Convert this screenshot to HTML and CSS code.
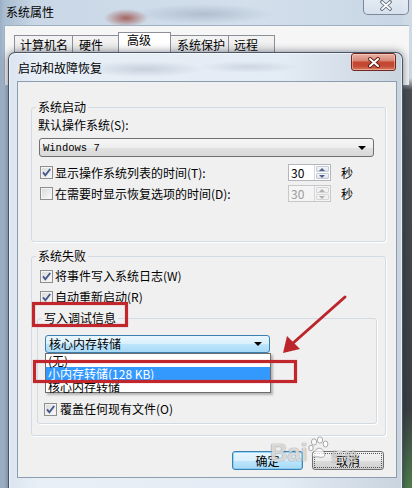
FILE: index.html
```html
<!DOCTYPE html>
<html lang="zh-CN">
<head>
<meta charset="utf-8">
<title>启动和故障恢复</title>
<link rel="stylesheet" href="styles.css">
</head>
<body>
<div class="desk">
  <div class="win-back">
    <div class="wb-titlebar">
      <span class="wb-title">系统属性</span>
      <span class="wb-close"><svg width="14" height="11" viewBox="0 0 14 11"><path d="M3 2 L11 9 M11 2 L3 9" stroke="#59677a" stroke-width="3.6" stroke-linecap="round"/><path d="M3 2 L11 9 M11 2 L3 9" stroke="#fff" stroke-width="1.8" stroke-linecap="round"/></svg></span>
    </div>
    <div class="wb-client">
      <div class="tabs">
        <div class="tab t1">计算机名</div>
        <div class="tab t2">硬件</div>
        <div class="tab t3 sel">高级</div>
        <div class="tab t4">系统保护</div>
        <div class="tab t5">远程</div>
      </div>
    </div>
  </div>

  <div class="dlg">
    <div class="dlg-titlebar">
      <span class="dlg-title">启动和故障恢复</span>
      <span class="dlg-close"><svg width="14" height="11" viewBox="0 0 14 11"><path d="M3 2 L11 9 M11 2 L3 9" stroke="#5a1e16" stroke-width="3.8" stroke-linecap="round"/><path d="M3 2 L11 9 M11 2 L3 9" stroke="#fff" stroke-width="2" stroke-linecap="round"/></svg></span>
    </div>
    <div class="client">
      <fieldset class="grp g1">
        <legend>系统启动</legend>
        <div class="lbl">默认操作系统(S):</div>
        <div class="combo sys"><span class="combo-text mono">Windows 7</span><span class="arrow"></span></div>
        <div class="row r1">
          <span class="cb"><svg width="11" height="11" viewBox="0 0 11 11"><path d="M2 5.3 L4.4 8.3 L9.2 2" fill="none" stroke="#44598a" stroke-width="1.9"/></svg></span>
          <span class="row-label">显示操作系统列表的时间(T):</span>
          <span class="spin"><span class="spin-val">30</span><span class="spin-btns"><span class="sb up"></span><span class="sb dn"></span></span></span>
          <span class="sec">秒</span>
        </div>
        <div class="row r2">
          <span class="cb"></span>
          <span class="row-label">在需要时显示恢复选项的时间(D):</span>
          <span class="spin dis"><span class="spin-val">30</span><span class="spin-btns"><span class="sb up"></span><span class="sb dn"></span></span></span>
          <span class="sec">秒</span>
        </div>
      </fieldset>

      <fieldset class="grp g2">
        <legend>系统失败</legend>
        <div class="cbrow ca">
          <span class="cb"><svg width="11" height="11" viewBox="0 0 11 11"><path d="M2 5.3 L4.4 8.3 L9.2 2" fill="none" stroke="#44598a" stroke-width="1.9"/></svg></span>
          <span>将事件写入系统日志(W)</span>
        </div>
        <div class="cbrow cb2">
          <span class="cb"><svg width="11" height="11" viewBox="0 0 11 11"><path d="M2 5.3 L4.4 8.3 L9.2 2" fill="none" stroke="#44598a" stroke-width="1.9"/></svg></span>
          <span>自动重新启动(R)</span>
        </div>
        <fieldset class="grp g3">
          <legend>写入调试信息</legend>
          <div class="combo-wrap">
            <div class="combo open"><span class="combo-text">核心内存转储</span><span class="arrow"></span></div>
            <div class="dd">
              <div class="dd-item">(无)</div>
              <div class="dd-item hl">小内存转储(128 KB)</div>
              <div class="dd-item">核心内存转储</div>
            </div>
          </div>
          <div class="cbrow cc">
            <span class="cb"><svg width="11" height="11" viewBox="0 0 11 11"><path d="M2 5.3 L4.4 8.3 L9.2 2" fill="none" stroke="#44598a" stroke-width="1.9"/></svg></span>
            <span>覆盖任何现有文件(O)</span>
          </div>
        </fieldset>
      </fieldset>

      <div class="btnrow">
        <span class="btn default">确定</span>
        <span class="btn cancel">取消</span>
      </div>
    </div>
  </div>

  <div class="watermark">
    <span class="wm-bai">Bai</span>
    <svg class="wm-paw" width="22" height="26" viewBox="0 0 22 26">
      <g fill="rgba(255,255,255,.7)" stroke="rgba(110,110,110,.55)" stroke-width="1">
        <ellipse cx="6" cy="6" rx="2.6" ry="3.2"/>
        <ellipse cx="12" cy="4" rx="2.6" ry="3.2"/>
        <ellipse cx="17.5" cy="8" rx="2.4" ry="3"/>
        <ellipse cx="3" cy="12" rx="2.2" ry="2.8"/>
        <path d="M6 21 C3 21 4 16 9 13 C12 11 15 13 16.5 17 C18 21 14 22 11 21 C9 20.5 8 21 6 21 Z"/>
      </g>
    </svg>
    <span class="wm-jy">经验</span>
  </div>

  <svg class="annot" width="412" height="488" viewBox="0 0 412 488">
    <rect x="33.5" y="303.5" width="93" height="22" fill="none" stroke="#c0262c" stroke-width="3.2"/>
    <rect x="34.5" y="361.5" width="261" height="20" fill="none" stroke="#c0262c" stroke-width="3.2"/>
    <line x1="345" y1="297" x2="292" y2="344" stroke="#bb252b" stroke-width="3" stroke-linecap="round"/>
    <polygon points="283,353 287,336 300,349" fill="#bb252b"/>
  </svg>
</div>
</body>
</html>
```

FILE: styles.css
```css
* { box-sizing: border-box; }
html, body { margin: 0; padding: 0; }
body {
  width: 412px;
  height: 488px;
  overflow: hidden;
  font-family: "Noto Sans CJK SC", "Noto Sans", sans-serif;
  font-size: 12px;
  line-height: 14px;
  color: #000;
}
.desk {
  position: relative;
  width: 412px;
  height: 488px;
  overflow: hidden;
  background: #c8d6e5;
}

/* ---------- background window (系统属性) ---------- */
.win-back {
  position: absolute;
  left: -6px;
  top: -10px;
  width: 424px;
  height: 510px;
  background:
    linear-gradient(to bottom, #cfdae6 0, #cfdae6 88px, #4a4e52 100px, #3c4044 420px, #4f7c4d 495px) right top / 15px 100% no-repeat,
    radial-gradient(ellipse 22px 9px at 132px 28px, rgba(150,60,50,.75), rgba(150,60,50,0)),
    radial-gradient(ellipse 70px 10px at 210px 24px, rgba(150,165,185,.55), rgba(150,165,185,0)),
    linear-gradient(to right, #8299b3 0, #a9bcd0 10px, #c9d7e6 40px, #d3dfeb 60%, #c7d5e4 100%);
  display: flex;
  flex-direction: column;
}
.wb-titlebar {
  display: flex;
  align-items: flex-start;
  height: 35px;
}
.wb-title {
  margin: 15px 0 0 12px;
  color: #000;
}
.wb-close {
  margin: 4px 9px 0 auto;
  width: 46px;
  height: 21px;
  border: 1px solid rgba(70,85,105,.65);
  border-top: none;
  border-radius: 0 0 5px 5px;
  background: linear-gradient(to bottom, rgba(255,255,255,.55), rgba(225,233,242,.55));
  display: flex;
  align-items: center;
  justify-content: center;
  padding-top: 3px;
}
.wb-client {
  margin-left: 10px;
  width: 405px;
  height: 60px;
  background: #f6f6f6;
  border-left: 1px solid #9fb0c2;
  border-top: 1px solid #9fb0c2;
}
.tabs {
  display: flex;
  align-items: flex-start;
  margin-top: 6px;
  padding-left: 9px;
  height: 40px;
}
.tab {
  margin-top: 3px;
  height: 30px;
  margin-left: -1px;
  border: 1px solid #8c8f97;
  border-bottom: none;
  background: linear-gradient(to bottom, #f4f4f4, #e2e2e2);
  padding: 2px 0 0 6px;
  white-space: nowrap;
}
.tab.t1 { width: 59px; margin-left: 0; padding-left: 5px; }
.tab.t2 { width: 47px; }
.tab.t3 { width: 53px; }
.tab.t4 { width: 59px; }
.tab.t5 { width: 47px; padding-left: 5px; }
.tab.sel {
  margin-top: 0;
  background: #fff;
  padding: 0 0 0 8px;
  position: relative;
  z-index: 1;
}

/* ---------- dialog (启动和故障恢复) ---------- */
.dlg {
  position: absolute;
  left: 8px;
  top: 52px;
  width: 395px;
  height: 446px;
  border: 1px solid rgba(35,50,68,.8);
  border-radius: 7px 7px 0 0;
  padding: 0 5px 0 8px;
  background:
    radial-gradient(ellipse 60px 8px at 135px 16px, rgba(160,172,190,.45), rgba(160,172,190,0)),
    radial-gradient(ellipse 50px 6px at 240px 14px, rgba(170,182,198,.4), rgba(170,182,198,0)),
    linear-gradient(to right, #dbe5f0 0, #e8eff7 30px, #e3ebf4 70%, #c9d4df 100%);
  box-shadow: 0 0 8px rgba(20,30,45,.55), inset 0 0 0 1px rgba(255,255,255,.55);
  z-index: 2;
}
.dlg-titlebar {
  display: flex;
  align-items: flex-start;
  height: 28px;
}
.dlg-title {
  margin: 8px 0 0 1px;
}
.dlg-close {
  margin: 0 1px 0 auto;
  width: 45px;
  height: 18px;
  border: 1px solid #6e2a20;
  border-radius: 3px;
  background: linear-gradient(to bottom, #eab2a4 0%, #d88a78 40%, #c5462f 52%, #c24a34 75%, #dc7a60 100%);
  box-shadow: inset 0 0 0 1px rgba(255,225,215,.45);
  display: flex;
  align-items: center;
  justify-content: center;
}
.client {
  width: 380px;
  height: 397px;
  border: 1px solid #8d9db0;
  background: #f0f0f0;
  display: flex;
  flex-direction: column;
  align-items: flex-start;
}

/* group boxes */
.grp {
  margin: 0;
  padding: 0;
  min-width: 0;
  border: 1px solid #d3dbe2;
  border-radius: 3px;
  box-shadow: 1px 1px 0 #fff;
}
.grp > legend {
  margin-left: 4px;
  padding: 0 2px;
  line-height: 14px;
}
.g1 {
  margin: 18px 0 0 13px;
  width: 355px;
  height: 142px;
}
.g2 {
  margin: 7px 0 0 13px;
  width: 355px;
  height: 187px;
}
.g3 {
  margin: 7px 0 0 5px;
  width: 340px;
  height: 113px;
}

.lbl { margin: 4px 0 0 6px; }

/* combo boxes */
.combo {
  position: relative;
  display: flex;
  align-items: center;
  border: 1px solid #707070;
  border-radius: 3px;
  padding: 0 7px 0 2px;
}
.combo.sys {
  margin: 6px 0 0 7px;
  width: 335px;
  height: 19px;
  background: linear-gradient(to bottom, #f6f6f6 0%, #eeeeee 50%, #e1e1e1 51%, #d9d9d9 100%);
}
.combo.open {
  width: 225px;
  height: 18px;
  border-color: #3c7fb1;
  background: linear-gradient(to bottom, #eaf6fd 0%, #d9f0fc 50%, #bee6fd 51%, #a7d9f5 100%);
}
.combo-text { flex: 1; }
.combo.open .combo-text { padding-left: 1px; }
.mono {
  font-family: "Liberation Mono", "DejaVu Sans Mono", monospace;
  font-size: 10.5px;
  padding-left: 1px;
}
.arrow {
  width: 0;
  height: 0;
  border-left: 4px solid transparent;
  border-right: 4px solid transparent;
  border-top: 4px solid #000;
}
.combo-wrap {
  position: relative;
  margin: 10px 0 0 7px;
  width: 226px;
}
.dd {
  position: absolute;
  left: 0;
  top: 18px;
  width: 226px;
  border: 1px solid #6d6d6d;
  background: #fff;
  box-shadow: 2px 2px 2px rgba(0,0,0,.25);
  z-index: 3;
}
.dd-item {
  height: 13px;
  line-height: 13px;
  padding-left: 2px;
  white-space: nowrap;
}
.dd-item:last-child { height: 12px; }
.dd-item.hl {
  background: #3399ff;
  color: #fff;
}

/* rows with checkbox */
.row {
  display: flex;
  align-items: center;
  margin-left: 8px;
  padding-right: 32px;
  width: 345px;
  height: 17px;
}
.r1 { margin-top: 7px; }
.r2 { margin-top: 4px; }
.row-label { flex: 1; margin-left: 2px; white-space: nowrap; }
.cb {
  flex: none;
  width: 13px;
  height: 13px;
  border: 1px solid #8e8f8f;
  background: linear-gradient(135deg, #d8d8d8, #fbfbfb);
  box-shadow: inset 0 0 0 1px #f3f3f3;
  display: inline-flex;
  align-items: center;
  justify-content: center;
}
.cbrow {
  display: flex;
  align-items: center;
  gap: 2px;
  height: 14px;
  white-space: nowrap;
}
.ca { margin: 6px 0 0 8px; }
.cb2 { margin: 7px 0 0 8px; }
.cc { margin: 49px 0 0 6px; gap: 3px; }

/* spin boxes */
.spin {
  flex: none;
  display: flex;
  width: 43px;
  height: 17px;
  border: 1px solid #b3b6bc;
  background: #fff;
}
.spin-val { flex: 1; padding-left: 2px; line-height: 15px; }
.spin-btns {
  width: 16px;
  display: flex;
  flex-direction: column;
  gap: 1px;
  padding: 1px;
  border-left: 1px solid #d4d7dc;
}
.sb {
  flex: 1;
  background: linear-gradient(to bottom, #f4f6f9, #dfe3e9);
  border: 1px solid #c4cbd4;
  border-radius: 1px;
  display: flex;
  align-items: center;
  justify-content: center;
}
.sb::after {
  content: "";
  width: 0;
  height: 0;
  border-left: 3px solid transparent;
  border-right: 3px solid transparent;
}
.sb.up::after { border-bottom: 3px solid #4d6185; }
.sb.dn::after { border-top: 3px solid #4d6185; }
.spin.dis { background: #f4f4f4; border-color: #c6c8cc; color: #9a9a9a; }
.spin.dis .sb { background: #f1f1f1; border-color: #d6d6d6; }
.spin.dis .sb.up::after { border-bottom-color: #b0b0b0; }
.spin.dis .sb.dn::after { border-top-color: #b0b0b0; }
.sec { margin-left: 10px; flex: none; }

/* buttons */
.btnrow {
  display: flex;
  justify-content: flex-end;
  gap: 9px;
  margin-top: 15px;
  padding-right: 12px;
  width: 100%;
}
.btn {
  height: 19px;
  display: flex;
  align-items: center;
  justify-content: center;
  border-radius: 3px;
}
.btn.default {
  width: 71px;
  border: 1px solid #3c7fb1;
  background: linear-gradient(to bottom, #eaf6fd 0%, #d9f0fc 50%, #bee6fd 51%, #a7d9f5 100%);
  box-shadow: inset 0 0 0 1px rgba(120,200,240,.7);
}
.btn.cancel {
  width: 72px;
  border: 1px solid #707070;
  background: linear-gradient(to bottom, #f2f2f2 0%, #ebebeb 50%, #dddddd 51%, #cfcfcf 100%);
  outline: 1px dotted #555;
  outline-offset: -3px;
}

/* watermark */
.watermark {
  position: absolute;
  left: 270px;
  top: 436px;
  z-index: 5;
  display: flex;
  align-items: flex-end;
  color: rgba(255,255,255,.72);
  text-shadow: 0 0 1px rgba(90,90,90,.55), 0 0 1px rgba(90,90,90,.55);
  font-family: "Liberation Sans", Arial, sans-serif;
  pointer-events: none;
}
.wm-bai { font-size: 24px; line-height: 30px; font-weight: bold; }
.wm-paw { margin: 0 0 6px 1px; align-self: flex-start; }
.wm-jy { font-family: "Noto Sans CJK SC", sans-serif; font-size: 13px; line-height: 24px; margin-left: 1px; }

/* annotations */
.annot {
  position: absolute;
  left: 0;
  top: 0;
  z-index: 10;
  pointer-events: none;
}
```
